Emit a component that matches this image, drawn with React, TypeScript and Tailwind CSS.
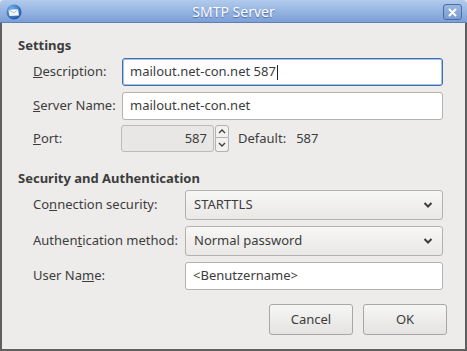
import { ReactNode } from "react";

const Label = ({ children, w }: { children: ReactNode; w: string }) => (
  <div className={`${w} shrink-0 text-[13px] text-[#3c3c3c]`}>{children}</div>
);

const Chevron = () => (
  <svg width="12" height="8" viewBox="0 0 12 8" className="shrink-0">
    <path d="M2.5 2 L6 5.5 L9.5 2" fill="none" stroke="#3c3c3c" strokeWidth="2" />
  </svg>
);

const Select = ({ value }: { value: string }) => (
  <div className="flex h-[30px] flex-1 items-center justify-between rounded-[3px] border border-[#b4b2ae] bg-gradient-to-b from-[#f7f7f6] to-[#e9e8e6] pl-[8px] pr-[8px] text-[13px] text-[#3c3c3c]">
    <span>{value}</span>
    <Chevron />
  </div>
);

export default function App() {
  return (
    <div
      className="flex h-[351px] w-[467px] flex-col overflow-hidden bg-[#edeceb]"
      style={{ fontFamily: '"Noto Sans", "Open Sans", sans-serif' }}
    >
      {/* title bar */}
      <div className="relative flex h-[23px] shrink-0 items-center justify-center rounded-t-[4px] border-b border-[#5d80b9] bg-gradient-to-b from-[#b2cbed] to-[#7c9fd6]">
        <div className="absolute left-[6px] top-[4px]">
          <svg width="16" height="16" viewBox="0 0 16 16">
            <defs>
              <radialGradient id="g" cx="0.35" cy="0.3" r="0.8">
                <stop offset="0" stopColor="#6fb2f2" />
                <stop offset="1" stopColor="#1b4f9e" />
              </radialGradient>
            </defs>
            <circle cx="8" cy="8" r="7.5" fill="url(#g)" />
            <path d="M2.5 6 L12 5 L13 11.5 L3.5 12 Z" fill="#f4f6fa" />
            <path d="M2.5 6 L8 9 L12 5" fill="none" stroke="#9bb0cf" strokeWidth="0.8" />
          </svg>
        </div>
        <span className="text-[14px] text-white [text-shadow:0_1px_1px_#4a6ba3]">SMTP Server</span>
        <div className="absolute right-[5px] top-[4px] flex h-[16px] w-[19px] items-center justify-center rounded-[3px] border border-[#4e6c9f] bg-gradient-to-b from-[#9ab7e2] to-[#7b9cd2]">
          <svg width="9" height="9" viewBox="0 0 9 9">
            <path d="M1.5 1.5 L7.5 7.5 M7.5 1.5 L1.5 7.5" stroke="white" strokeWidth="2" strokeLinecap="round" />
          </svg>
        </div>
      </div>

      {/* body */}
      <div className="flex flex-1 flex-col border-x-2 border-b-2 border-[#5f5f5f] pl-[16px] pr-[22px] pt-[14px]">
        <div className="text-[13px] font-bold leading-4 text-[#3c3c3c]">Settings</div>

        <div className="mt-[5px] flex flex-col pl-[15px]">
          <div className="flex items-center">
            <Label w="w-[89px]">
              <u>D</u>escription:
            </Label>
            <div className="flex h-[28px] flex-1 items-center rounded-[3px] border border-[#3d6eb5] bg-white px-[7px] text-[13px] text-[#3c3c3c] shadow-[inset_0_0_0_1px_#a8c1e4]">
              mailout.net-con.net 587
              <span className="ml-[1px] inline-block h-[15px] w-px bg-[#222]" />
            </div>
          </div>

          <div className="mt-[6px] flex items-center">
            <Label w="w-[89px]">
              <u>S</u>erver Name:
            </Label>
            <div className="flex h-[28px] flex-1 items-center rounded-[3px] border border-[#b4b2ae] bg-white px-[7px] text-[13px] text-[#3c3c3c]">
              mailout.net-con.net
            </div>
          </div>

          <div className="mt-[5px] flex items-center">
            <Label w="w-[88px]">
              <u>P</u>ort:
            </Label>
            <div className="flex h-[27px] w-[93px] items-center justify-end rounded-[3px] border border-[#bdbbb7] bg-[#e8e7e5] px-[6px] text-[13px] text-[#3c3c3c]">
              587
            </div>
            <div className="ml-[1px] flex h-[27px] w-[14px] flex-col">
              <div className="flex h-[13px] items-center justify-center rounded-t-[3px] border border-[#b4b2ae] bg-[#f2f1f0]">
                <svg width="8" height="5" viewBox="0 0 8 5">
                  <path d="M1 4 L4 1 L7 4" fill="none" stroke="#3c3c3c" strokeWidth="1.3" />
                </svg>
              </div>
              <div className="flex h-[14px] items-center justify-center rounded-b-[3px] border border-t-0 border-[#b4b2ae] bg-[#f2f1f0]">
                <svg width="8" height="5" viewBox="0 0 8 5">
                  <path d="M1 1 L4 4 L7 1" fill="none" stroke="#3c3c3c" strokeWidth="1.3" />
                </svg>
              </div>
            </div>
            <span className="ml-[9px] text-[13px] text-[#3c3c3c]">Default:</span>
            <span className="ml-[10px] text-[13px] text-[#3c3c3c]">587</span>
          </div>
        </div>

        <div className="mt-[18px] text-[13px] font-bold leading-4 text-[#3c3c3c]">
          Security and Authentication
        </div>

        <div className="mt-[4px] flex flex-col pl-[15px]">
          <div className="flex items-center">
            <Label w="w-[152px]">
              Co<u>n</u>nection security:
            </Label>
            <Select value="STARTTLS" />
          </div>
          <div className="mt-[6px] flex items-center">
            <Label w="w-[152px]">
              Authen<u>t</u>ication method:
            </Label>
            <Select value="Normal password" />
          </div>
          <div className="mt-[6px] flex items-center">
            <Label w="w-[152px]">
              User Na<u>m</u>e:
            </Label>
            <div className="flex h-[28px] flex-1 items-center rounded-[3px] border border-[#b4b2ae] bg-white px-[7px] text-[13px] text-[#3c3c3c]">
              &lt;Benutzername&gt;
            </div>
          </div>
        </div>

        <div className="mt-[14px] flex justify-end gap-[10px]" style={{ marginRight: -4 }}>
          <button className="h-[31px] w-[84px] rounded-[3px] border border-[#a9a7a3] bg-gradient-to-b from-[#f6f6f5] to-[#e4e3e1] text-[13px] text-[#3c3c3c]">
            Cancel
          </button>
          <button className="h-[31px] w-[84px] rounded-[3px] border border-[#a9a7a3] bg-gradient-to-b from-[#f6f6f5] to-[#e4e3e1] text-[13px] text-[#3c3c3c]">
            OK
          </button>
        </div>
      </div>
    </div>
  );
}
